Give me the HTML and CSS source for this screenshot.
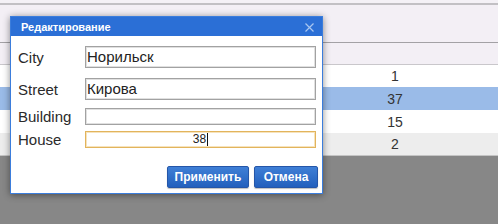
FILE: index.html
```html
<!DOCTYPE html>
<html>
<head>
<meta charset="utf-8">
<link rel="stylesheet" href="styles.css">
</head>
<body>
<div class="page">
  <div class="topstrip"></div>
  <div class="head"></div>
  <div class="filter"></div>
  <div class="row r1"><span class="cell">1</span></div>
  <div class="row r2"><span class="cell">37</span></div>
  <div class="row r3"><span class="cell">15</span></div>
  <div class="row r4"><span class="cell">2</span></div>
  <div class="mask"></div>
</div>

<div class="dialog">
  <div class="title">
    <span>Редактирование</span>
    <svg class="close" width="9" height="9" viewBox="0 0 9 9"><path d="M0.5 0.5 L8.5 8.5 M8.5 0.5 L0.5 8.5" stroke="#a9c6f0" stroke-width="1.2" fill="none"/></svg>
  </div>
  <div class="body">
    <div class="frow f-city"><label>City</label><div class="inp">Норильск</div></div>
    <div class="frow f-street"><label>Street</label><div class="inp">Кирова</div></div>
    <div class="frow f-building"><label>Building</label><div class="inp small"></div></div>
    <div class="frow f-house"><label>House</label><div class="inp small focus"><span>38</span><i class="caret"></i></div></div>
    <div class="buttons">
      <button class="btn b-apply">Применить</button>
      <button class="btn b-cancel">Отмена</button>
    </div>
  </div>
</div>
</body>
</html>
```

FILE: styles.css
```css
html, body {
  margin: 0;
  padding: 0;
}
body {
  width: 498px;
  height: 224px;
  overflow: hidden;
  position: relative;
  font-family: "Liberation Sans", Arial, sans-serif;
  background: #878787;
}
.page {
  display: flex;
  flex-direction: column;
  height: 224px;
}
.topstrip {
  height: 3px;
  background: #f4f1f6;
  border-bottom: 2px solid #c2c0c4;
}
.head {
  height: 37px;
  background: #f3eff5;
  border-bottom: 1px solid #a3a1a5;
}
.filter {
  height: 21px;
  background: #f3eff5;
  border-bottom: 1px solid #c9c7cb;
}
.row {
  height: 22px;
  display: flex;
  align-items: center;
  font-size: 14px;
  color: #333;
}
.row .cell {
  margin-left: 386px;
  width: 18px;
  text-align: center;
}
.r1 { background: #ffffff; }
.r2 { background: #9abbe8; height: 23px; }
.r3 { background: #ffffff; height: 23px; }
.r4 { background: #ededed; border-bottom: 1px solid #c4c4c4; }
.mask {
  flex: 1;
  background: #878787;
}

.dialog {
  position: absolute;
  left: 10px;
  top: 16px;
  width: 311px;
  height: 176px;
  border: 1px solid #3b7ddc;
  background: #fff;
  box-shadow: 0 1px 7px rgba(0, 0, 0, 0.45);
  display: flex;
  flex-direction: column;
}
.title {
  height: 19px;
  background: #2b6fd6;
  color: #fff;
  font-weight: bold;
  font-size: 11px;
  display: flex;
  align-items: center;
  justify-content: space-between;
  padding: 0 8px 0 10px;
}
.title span { margin-top: 1px; }
.close { margin-top: 1px; }
.body {
  flex: 1;
  padding: 10px 6px 0 7px;
  display: flex;
  flex-direction: column;
}
.frow {
  display: flex;
  align-items: center;
}
.frow label {
  width: 67px;
  font-size: 15px;
  color: #2a2a2a;
}
.inp {
  flex: 1;
  height: 20px;
  border: 1px solid #a2a2a2;
  box-shadow: inset 0 0 0 1px #e0e0e0;
  font-size: 15px;
  color: #222;
  line-height: 20px;
  padding-left: 1px;
  box-sizing: content-box;
}
.inp.small {
  height: 15px;
  line-height: 15px;
}
.inp.focus {
  border-color: #e2b45c;
  box-shadow: inset 0 0 0 1px #f6e3bd;
  display: flex;
  justify-content: center;
  align-items: center;
  font-size: 12px;
  padding-left: 0;
}
.caret {
  display: inline-block;
  width: 1px;
  height: 13px;
  background: #111;
  margin-left: 1px;
}
.f-street { margin-top: 10px; }
.f-building { margin-top: 8px; }
.f-house { margin-top: 6px; }
.buttons {
  display: flex;
  justify-content: flex-end;
  gap: 5px;
  margin-top: 18px;
  margin-right: -2px;
}
.btn {
  height: 22px;
  border: 1px solid #2556a8;
  border-radius: 2px;
  background: linear-gradient(#3f7fd6, #2360bd);
  color: #fff;
  font-family: "Liberation Sans", Arial, sans-serif;
  font-weight: bold;
  font-size: 12px;
  padding: 0;
  box-shadow: 0 1px 1px rgba(0,0,0,0.25);
}
.b-apply { width: 82px; }
.b-cancel { width: 64px; }
```
